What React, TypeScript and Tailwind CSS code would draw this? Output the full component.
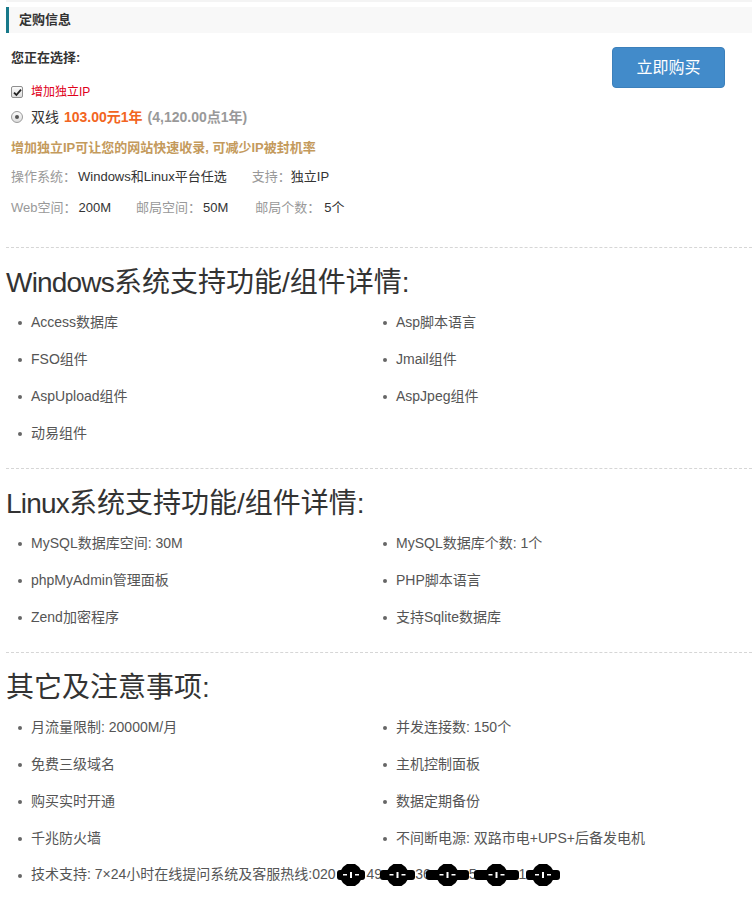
import React from 'react';

const font = "font-['Liberation_Sans','Noto_Sans_CJK_SC',sans-serif]";

type Item = { text: React.ReactNode; wide?: boolean };

// redaction blot over the phone number
function Blob({ w, className = '' }: { w: number; className?: string }) {
  const c = w / 2;
  const hex = [
    [c - 13, 12], [c - 8, 4], [c - 4, 1], [c + 4, 1], [c + 8, 4],
    [c + 13, 12], [c + 8, 20], [c + 4, 23], [c - 4, 23], [c - 8, 20],
  ]
    .map((p) => p.join(','))
    .join(' ');
  return (
    <svg width={w} height="24" viewBox={`0 0 ${w} 24`} className={`inline-block align-middle -mt-[1px] ${className}`}>
      <rect x="0" y="7" width={w} height="10" rx="3" fill="#000" />
      <polygon points={hex} fill="#000" />
      <rect x={c - 8} y="11" width="4" height="1.5" fill="#fff" />
      <rect x={c + 4} y="11" width="4" height="1.5" fill="#fff" />
      <rect x={c - 1} y="9" width="2" height="6" fill="#fff" />
    </svg>
  );
}

function Section({ latin, title, items }: { latin?: string; title: string; items: Item[] }) {
  return (
    <section className="border-t border-dashed border-[#d6d6d6] pt-[17px] pb-[16px]">
      <h2 className="text-[28px] leading-[36px] font-normal text-[#333]">
        {latin && <span className="tracking-[-0.8px]">{latin}</span>}
        {title}
      </h2>
      <ul className="mt-[3px] grid grid-cols-[377px_1fr]">
        {items.map((it, i) => (
          <li
            key={i}
            className={`h-[37px] flex items-center text-[14px] text-[#555] whitespace-nowrap ${
              it.wide ? 'col-span-2 pl-[12px]' : i % 2 === 0 ? 'pl-[12px]' : ''
            }`}
          >
            <span className="w-[4px] h-[4px] rounded-full bg-[#666] mr-[9px] shrink-0" />
            <span>{it.text}</span>
          </li>
        ))}
      </ul>
    </section>
  );
}

export default function App() {
  const windows: Item[] = [
    { text: 'Access数据库' },
    { text: 'Asp脚本语言' },
    { text: 'FSO组件' },
    { text: 'Jmail组件' },
    { text: 'AspUpload组件' },
    { text: 'AspJpeg组件' },
    { text: '动易组件' },
  ];
  const linux: Item[] = [
    { text: 'MySQL数据库空间: 30M' },
    { text: 'MySQL数据库个数: 1个' },
    { text: 'phpMyAdmin管理面板' },
    { text: 'PHP脚本语言' },
    { text: 'Zend加密程序' },
    { text: '支持Sqlite数据库' },
  ];
  const others: Item[] = [
    { text: '月流量限制: 20000M/月' },
    { text: '并发连接数: 150个' },
    { text: '免费三级域名' },
    { text: '主机控制面板' },
    { text: '购买实时开通' },
    { text: '数据定期备份' },
    { text: '千兆防火墙' },
    { text: '不间断电源: 双路市电+UPS+后备发电机' },
    {
      wide: true,
      text: (
        <>
          技术支持: 7×24小时在线提问系统及客服热线:020
          <Blob w={28} className="ml-[1px]" />
          <span className="ml-[2px]">49</span>
          <Blob w={35} className="-ml-[2px]" />
          36
          <Blob w={43} className="-ml-[5px]" />
          5
          <Blob w={45} className="-ml-[3px]" />
          1
          <Blob w={34} />
        </>
      ),
    },
  ];

  return (
    <div className={`w-[752px] min-h-[906px] bg-white pl-[6px] ${font} text-[13px] text-[#333]`}>
      {/* 定购信息 */}
      <div className="h-[7px] border-t-2 border-[#f4f4f4]" />
      <div className="h-[26px] bg-[#f8f8f8] border-l-[3px] border-[#17798a] pl-[10px] flex items-center font-bold text-[13px] text-[#333]">
        定购信息
      </div>

      <div className="flex justify-between pr-[27px]">
        <div className="pl-[5px] pb-[29px]">
          <div className="mt-[15px] leading-5 font-bold">您正在选择:</div>

          <div className="mt-[14px] leading-5 flex items-center">
            <span className="w-[12px] h-[12px] border border-[#8f8f8f] rounded-[2px] bg-gradient-to-b from-[#fbfbfb] to-[#dedede] flex items-center justify-center mr-[8px]">
              <svg width="9" height="9" viewBox="0 0 9 9">
                <path d="M1 4.6 L3.4 7 L8 1.6" stroke="#222" strokeWidth="1.8" fill="none" />
              </svg>
            </span>
            <span className="text-[12px] text-[#e0001a]">增加独立IP</span>
          </div>

          <div className="mt-[5px] leading-5 flex items-center">
            <span className="w-[12px] h-[12px] border border-[#9a9a9a] rounded-full bg-gradient-to-b from-[#fbfbfb] to-[#dedede] flex items-center justify-center mr-[8px]">
              <span className="w-[4px] h-[4px] rounded-full bg-[#555]" />
            </span>
            <span className="text-[14px] text-[#333]">双线</span>
            <span className="ml-[5px] text-[14px] font-bold text-[#f26522]">103.00元1年</span>
            <span className="ml-[5px] text-[14px] font-bold text-[#999]">(4,120.00点1年)</span>
          </div>

          <div className="mt-[11px] leading-5 font-bold text-[#c49a5c]">
            增加独立IP可让您的网站快速收录, 可减少IP被封机率
          </div>

          <div className="mt-[9px] leading-5 whitespace-nowrap">
            <span className="text-[#999]">操作系统：</span>
            <span className="ml-[2px]">Windows和Linux平台任选</span>
            <span className="ml-[25px] text-[#999]">支持：</span>
            <span>独立IP</span>
          </div>

          <div className="mt-[11px] leading-5 whitespace-nowrap">
            <span className="text-[#999]">Web空间：</span>
            <span className="ml-[2px]">200M</span>
            <span className="ml-[25px] text-[#999]">邮局空间：</span>
            <span className="ml-[2px]">50M</span>
            <span className="ml-[27px] text-[#999]">邮局个数：</span>
            <span className="ml-[4px]">5个</span>
          </div>
        </div>

        <button className="mt-[14px] w-[113px] h-[41px] rounded-[4px] bg-[#428bca] border border-[#3c80bb] text-white text-[16px]">
          立即购买
        </button>
      </div>

      <Section latin="Windows" title="系统支持功能/组件详情:" items={windows} />
      <Section latin="Linux" title="系统支持功能/组件详情:" items={linux} />
      <Section title="其它及注意事项:" items={others} />
    </div>
  );
}
